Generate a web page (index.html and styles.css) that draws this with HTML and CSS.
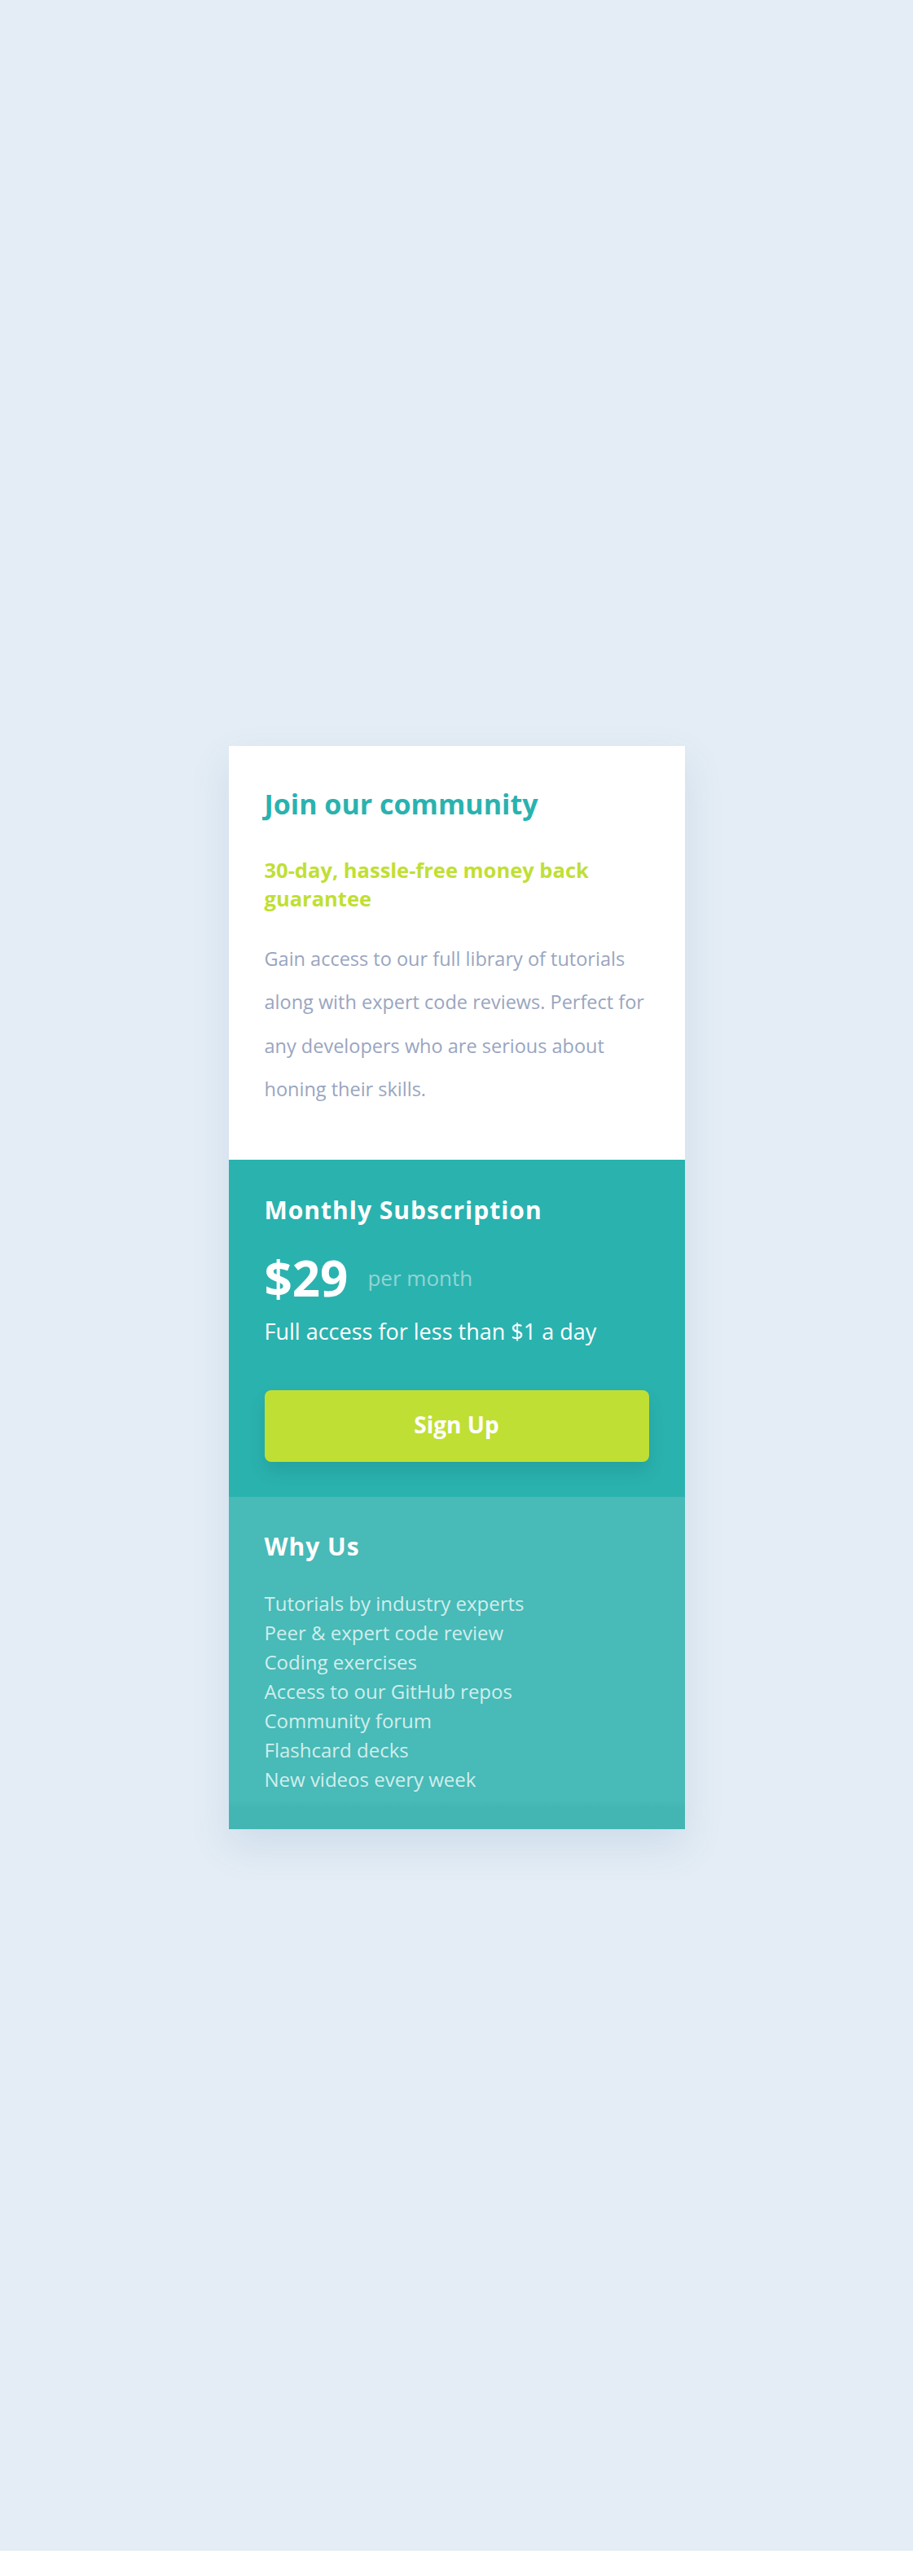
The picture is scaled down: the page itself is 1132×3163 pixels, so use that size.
FILE: index.html
```html
<!DOCTYPE html>
<html lang="en">
<head>
<meta charset="utf-8">
<title>Single price grid</title>
<link rel="stylesheet" href="styles.css">
</head>
<body>
<main class="page">
  <article class="card">
    <section class="intro">
      <h1 class="intro-title">Join our community</h1>
      <h2 class="intro-sub">30-day, hassle-free money back guarantee</h2>
      <p class="intro-text">Gain access to our full library of tutorials along with expert code reviews. Perfect for any developers who are serious about honing their skills.</p>
    </section>
    <section class="plan">
      <h2 class="plan-title">Monthly Subscription</h2>
      <div class="price-row">
        <span class="price">$29</span>
        <span class="per">per month</span>
      </div>
      <p class="plan-text">Full access for less than $1 a day</p>
      <button class="signup" type="button">Sign Up</button>
    </section>
    <section class="why">
      <h2 class="why-title">Why Us</h2>
      <ul class="why-list">
        <li>Tutorials by industry experts</li>
        <li>Peer &amp; expert code review</li>
        <li>Coding exercises</li>
        <li>Access to our GitHub repos</li>
        <li>Community forum</li>
        <li>Flashcard decks</li>
        <li>New videos every week</li>
      </ul>
    </section>
  </article>
</main>
</body>
</html>
```

FILE: styles.css
```css
* { box-sizing: border-box; }
html, body { margin: 0; padding: 0; background: #ffffff; }
body { font-family: "Open Sans", "Liberation Sans", sans-serif; }

.page {
  width: 1121px;
  height: 3132px;
  background: #e4edf5;
  display: flex;
  align-items: center;
  justify-content: center;
  padding-top: 30px;
}

.card {
  width: 560px;
  background: #ffffff;
  box-shadow: 0 20px 45px rgba(60, 110, 170, 0.13);
}

.intro { padding: 49px 44px 60px; }
.intro-title { margin: 0; font-size: 34px; line-height: 44px; font-weight: 700; color: #2ab2af; }
.intro-sub { margin: 42px 0 0; font-size: 25.5px; line-height: 35px; font-weight: 700; color: #c0df34; }
.intro-text { margin: 30px 0 0; font-size: 23.5px; line-height: 53.3px; color: #99a5bf; }

.plan { background: #2ab2af; padding: 44px 44px 43px; color: #ffffff; }
.plan-title { margin: 0; font-size: 30px; line-height: 36px; font-weight: 700; letter-spacing: 1px; }
.price-row { display: flex; align-items: center; gap: 24px; height: 60px; margin-top: 35px; }
.price { font-size: 60px; line-height: 60px; font-weight: 700; }
.per { font-size: 26px; color: #92d5d3; }
.plan-text { margin: 18px 0 0; font-size: 27px; line-height: 36px; }
.signup {
  display: flex; align-items: center; justify-content: center;
  width: 100%; height: 88px; margin-top: 54px; padding: 0 0 4px;
  border: 0; border-radius: 8px;
  background: #c0df34; color: #ffffff;
  font-family: inherit; font-size: 28px; font-weight: 700;
  box-shadow: 0 12px 20px rgba(0, 70, 70, 0.14);
}

.why {
  padding: 43px 44px;
  color: #ffffff;
  background: linear-gradient(to bottom, #48bab7 0, #48bab7 calc(100% - 36px), #43b6b3 calc(100% - 26px), #43b6b3 100%);
}
.why-title { margin: 0; font-size: 30px; line-height: 36px; font-weight: 700; letter-spacing: 1px; }
.why-list { list-style: none; margin: 34px 0 0; padding: 0; font-size: 24px; line-height: 36px; color: #d1eeed; }
```
